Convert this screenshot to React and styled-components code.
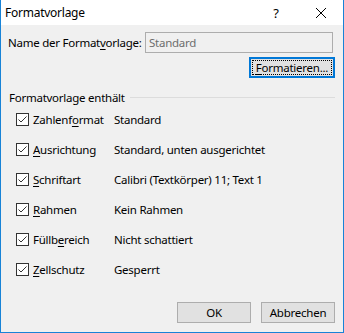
import React from "react";
import styled, { createGlobalStyle } from "styled-components";

const Global = createGlobalStyle`
  html, body { margin: 0; padding: 0; background: #ffffff; }
  body {
    font-family: "Noto Sans", "Open Sans", sans-serif;
    font-size: 11.5px;
    letter-spacing: -0.25px;
    color: #000;
    white-space: nowrap;
  }
  * { box-sizing: border-box; }
`;

const Window = styled.div`
  width: 344px;
  height: 333px;
  display: flex;
  flex-direction: column;
  background: #f0f0f0;
  border-left: 1px solid #1883d7;
  border-right: 1px solid #1883d7;
  border-bottom: 1px solid #1883d7;
`;

const TitleBar = styled.div`
  height: 25px;
  background: #ffffff;
  display: flex;
  align-items: center;
  padding-left: 4px;
  flex-shrink: 0;
`;

const Title = styled.span`
  font-size: 12px;
  flex: 1;
`;

const HelpGlyph = styled.span`
  width: 16px;
  margin-right: 31px;
  font-size: 13px;
  text-align: center;
`;

const CloseBox = styled.span`
  width: 12px;
  height: 12px;
  margin-right: 16px;
  display: flex;
`;

const Content = styled.div`
  flex: 1;
  display: flex;
  flex-direction: column;
  padding: 7px 8px 9px 7px;
`;

const NameRow = styled.div`
  display: grid;
  grid-template-columns: 137px 188px;
  align-items: center;
  height: 21px;
`;

const Key = styled.span`
  text-decoration: underline;
  text-underline-offset: 2px;
`;

const TextField = styled.div`
  height: 21px;
  border: 1px solid #adadad;
  background: #f0f0f0;
  color: #6d6d6d;
  display: flex;
  align-items: center;
  padding-left: 3px;
`;

const RightRow = styled.div`
  display: flex;
  justify-content: flex-end;
  margin-top: ${(p) => p.$top || 0}px;
`;

const Button = styled.div`
  width: ${(p) => p.$w}px;
  height: 21px;
  background: #e1e1e1;
  border: ${(p) => (p.$default ? "2px solid #0078d7" : "1px solid #adadad")};
  display: flex;
  align-items: center;
  justify-content: center;
  padding: 1px;
`;

const FocusRect = styled.div`
  width: 100%;
  height: 100%;
  border: 1px dotted #000;
  display: flex;
  align-items: center;
  justify-content: center;
`;

const GroupHeader = styled.div`
  display: flex;
  align-items: center;
  gap: 5px;
  height: 14px;
  margin-top: 12px;
  padding-left: 1px;
`;

const GroupLine = styled.div`
  flex: 1;
  height: 1px;
  background: #dcdcdc;
`;

const Options = styled.div`
  display: flex;
  flex-direction: column;
  gap: 17px;
  margin-top: 8px;
  padding-left: 8px;
`;

const OptionRow = styled.div`
  display: grid;
  grid-template-columns: 17px 81px 1fr;
  align-items: center;
  height: 13px;
`;

const Footer = styled.div`
  margin-top: auto;
  display: flex;
  justify-content: flex-end;
  gap: 10px;
`;

const CheckBox = () => (
  <svg width="13" height="13" viewBox="0 0 13 13">
    <rect x="0.5" y="0.5" width="12" height="12" fill="#ffffff" stroke="#333333" />
    <path d="M2.5 6.5 L5 9 L10.5 3.5" fill="none" stroke="#333333" strokeWidth="1" />
  </svg>
);

const CloseIcon = () => (
  <svg width="12" height="12" viewBox="0 0 12 12">
    <path d="M1 1 L11 11 M11 1 L1 11" stroke="#000" strokeWidth="1" />
  </svg>
);

const options = [
  { label: ["Zahlenf", "o", "rmat"], value: "Standard" },
  { label: ["", "A", "usrichtung"], value: "Standard, unten ausgerichtet" },
  { label: ["", "S", "chriftart"], value: "Calibri (Textkörper) 11; Text 1" },
  { label: ["", "R", "ahmen"], value: "Kein Rahmen" },
  { label: ["Füllb", "e", "reich"], value: "Nicht schattiert" },
  { label: ["", "Z", "ellschutz"], value: "Gesperrt" },
];

export default function App() {
  return (
    <>
      <Global />
      <Window>
        <TitleBar>
          <Title>Formatvorlage</Title>
          <HelpGlyph>?</HelpGlyph>
          <CloseBox>
            <CloseIcon />
          </CloseBox>
        </TitleBar>
        <Content>
          <NameRow>
            <span>
              Name der Format<Key>v</Key>orlage:
            </span>
            <TextField>Standard</TextField>
          </NameRow>
          <RightRow $top={4}>
            <Button $w={86} $default>
              <FocusRect>
                <span>
                  <Key>F</Key>ormatieren...
                </span>
              </FocusRect>
            </Button>
          </RightRow>
          <GroupHeader>
            <span>Formatvorlage enthält</span>
            <GroupLine />
          </GroupHeader>
          <Options>
            {options.map((o) => (
              <OptionRow key={o.value}>
                <CheckBox />
                <span>
                  {o.label[0]}
                  <Key>{o.label[1]}</Key>
                  {o.label[2]}
                </span>
                <span>{o.value}</span>
              </OptionRow>
            ))}
          </Options>
          <Footer>
            <Button $w={74}>OK</Button>
            <Button $w={74}>Abbrechen</Button>
          </Footer>
        </Content>
      </Window>
    </>
  );
}
